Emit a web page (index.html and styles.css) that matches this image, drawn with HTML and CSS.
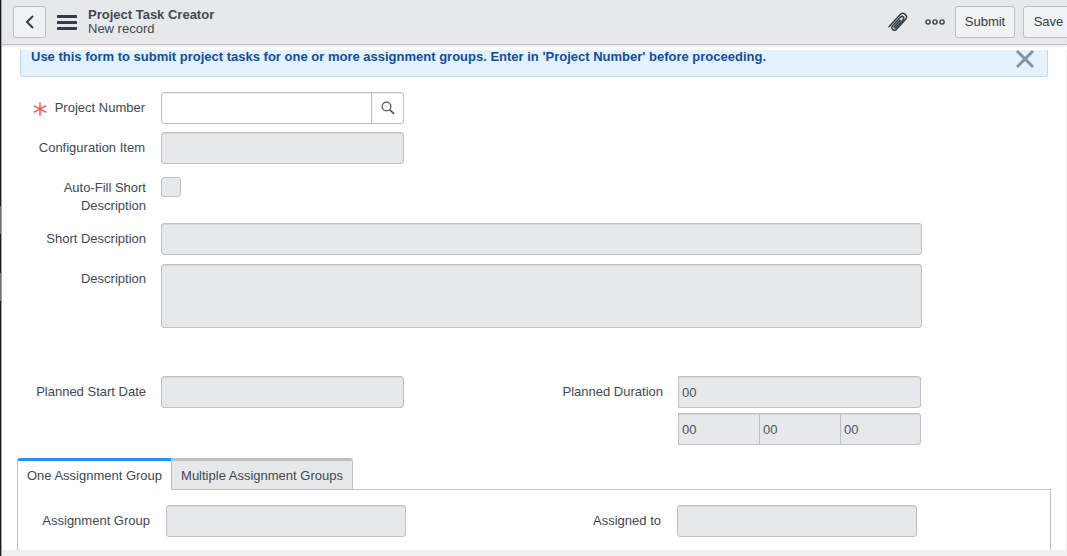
FILE: index.html
```html
<!DOCTYPE html>
<html lang="en">
<head>
<meta charset="utf-8">
<title>Project Task Creator</title>
<link rel="stylesheet" href="styles.css">
</head>
<body>
<div class="edge"><i class="thumb"></i><i class="thumb second"></i></div>
<div class="app">
  <header class="bar">
    <button class="btn back" aria-label="Back"><svg width="10" height="14" viewBox="0 0 10 14"><path d="M8 1 2 7l6 6" fill="none" stroke="#343d47" stroke-width="2"/></svg></button>
    <svg class="menu" width="20" height="15" viewBox="0 0 20 15"><path d="M1 1.5h18M1 7.5h18M1 13.5h18" stroke="#343d47" stroke-width="3" stroke-linecap="round"/></svg>
    <div class="title"><b>Project Task Creator</b><span>New record</span></div>
    <svg class="clip" width="20" height="20" viewBox="0 0 20 20"><path d="M1 14.8 12 2.7c3.3-3.4 8.6.8 5.6 4.6L8.8 17c-2.6 2.9-6.8-.2-4.2-3.2l7.9-8.5c1.9-2 4.6 0 2.8 2.2l-7.4 8c-1 1-2.3 0-1.4-1.1l5.5-6" fill="none" stroke="#343d47" stroke-width="1.5" stroke-linejoin="round" stroke-linecap="round"/></svg>
    <svg class="dots" width="20" height="6" viewBox="0 0 20 6"><g fill="none" stroke="#343d47" stroke-width="1.4"><circle cx="3" cy="3" r="2.1"/><circle cx="10" cy="3" r="2.1"/><circle cx="17" cy="3" r="2.1"/></g></svg>
    <button class="btn submit">Submit</button>
    <button class="btn save">Save</button>
  </header>
  <main class="content">
    <div class="notice"><b>Use this form to submit project tasks for one or more assignment groups. Enter in 'Project Number' before proceeding.</b>
      <svg class="close" width="20" height="20" viewBox="0 0 20 20"><path d="m2 2 16 16M18 2 2 18" stroke="#8792a0" stroke-width="3"/></svg>
    </div>
    <div class="row project">
      <label><svg class="star" width="14" height="14" viewBox="0 0 14 14"><path d="M7 .3v13.4M.8 3.6l12.4 6.8M13.2 3.6.8 10.4" stroke="#ff5454" stroke-width="1.5"/></svg>Project Number</label>
      <div class="field lookup"><span class="entry"></span><span class="search"><svg width="14" height="14" viewBox="0 0 14 14"><circle cx="5.5" cy="5.5" r="4.4" fill="none" stroke="#485563" stroke-width="1.2"/><path d="m8.8 8.8 4.4 4" stroke="#485563" stroke-width="1.7"/></svg></span></div>
    </div>
    <div class="row config"><label>Configuration Item</label><div class="field off"></div></div>
    <div class="row auto"><label>Auto-Fill Short<br>Description</label><div class="check"></div></div>
    <div class="row short"><label>Short Description</label><div class="field off wide"></div></div>
    <div class="row desc"><label>Description</label><div class="field off wide tall"></div></div>
    <div class="row planned">
      <label>Planned Start Date</label><div class="field off"></div>
      <label class="label-two">Planned Duration</label>
      <div class="duration"><div class="cell last">00</div><div class="parts"><div class="cell">00</div><div class="cell">00</div><div class="cell last">00</div></div></div>
    </div>
    <section class="tabs">
      <div class="tablist"><div class="tab active">One Assignment Group</div><div class="tab idle">Multiple Assignment Groups</div><div class="rest"></div></div>
      <div class="panel">
        <label>Assignment Group</label><div class="field off"></div>
        <label class="label-two">Assigned to</label><div class="field off"></div>
      </div>
    </section>
  </main>
  <div class="scroll"></div>
</div>
</body>
</html>
```
FILE: styles.css
```css
* { box-sizing: border-box; }
body { margin: 0; width: 1067px; height: 556px; display: flex; overflow: hidden; background: #fff; color: #404953; font: 13px/18px "Liberation Sans", Arial, sans-serif; }
svg { display: block; flex: none; }
.edge { width: 2px; flex: none; background: #1c1c20; border-right: 1px solid #a3a3a5; padding-top: 206px; }
.thumb { display: block; height: 28px; background: #707072; }
.second { margin-top: 39px; }
.app { width: 1065px; height: 556px; display: flex; flex-direction: column; overflow: hidden; }
.bar { height: 45px; flex: none; display: flex; align-items: flex-start; background: #e6e8ea; border-bottom: 1px solid #bdc0c4; box-shadow: 0 1px 3px rgba(0,0,0,.12); padding-left: 11px; }
.btn { height: 32px; margin: 6px 0 0; padding: 0; flex: none; display: flex; align-items: center; justify-content: center; border: 1px solid #bdc0c4; border-radius: 3px; background: #f1f2f3; color: #343d47; font: 13px/18px "Liberation Sans", Arial, sans-serif; }
.back { width: 33px; }
.menu { margin: 15px 0 0 11px; }
.title { margin: 8px 0 0 11px; width: 800px; flex: none; display: flex; flex-direction: column; line-height: 14px; }
.clip { margin: 12px 0 0; }
.dots { margin: 19px 0 0 17px; }
.submit { width: 60px; margin-left: 10px; }
.save { width: 51px; margin-left: 8px; }
.content { height: 500px; margin-top: 5px; flex: none; overflow: hidden; border-right: 1px solid #f0f0f0; }
.notice { height: 27px; width: 1028px; margin-left: 18px; padding: 0 12px 0 10px; display: flex; justify-content: space-between; overflow: hidden; border: 1px solid #b8d9fb; border-top: 0; border-radius: 0 0 3px 3px; background: #e4f1ff; color: #0f4fa0; line-height: 14px; }
.close { margin-top: -1px; }
.row { display: flex; align-items: flex-start; }
.row > label { width: 144px; padding-top: 7px; margin-right: 15px; flex: none; text-align: right; }
.project { margin-top: 15px; }
.row.project > label { display: flex; justify-content: flex-end; padding-right: 1px; }
.star { margin: 3px 8px 0 0; }
.config { margin-top: 8px; }
.row.config > label { padding-right: 1px; }
.auto { margin-top: 13px; height: 46px; }
.row.auto > label { padding-top: 2px; }
.desc { margin-top: 9px; }
.row.desc > label { padding-top: 6px; }
.planned { margin-top: 48px; height: 82px; }
.field { width: 243px; height: 32px; flex: none; border: 1px solid #bdc0c4; border-radius: 3px; background: #fff; box-shadow: inset 0 1px 1px rgba(0,0,0,.07); }
.off { background: #e6e8ea; }
.wide { width: 761px; }
.tall { height: 64px; }
.lookup { display: flex; }
.entry { width: 210px; border-right: 1px solid #bdc0c4; }
.search { flex: 1; display: flex; align-items: center; justify-content: center; }
.check { width: 20px; height: 20px; border: 1px solid #bdc0c4; border-radius: 3px; background: #e6e8ea; }
.row.planned > .label-two { width: 259px; }
.duration { width: 243px; }
.cell { height: 32px; padding: 8px 3px 6px; line-height: 16px; border: 1px solid #bdc0c4; background: #e6e8ea; color: #485563; box-shadow: inset 0 1px 1px rgba(0,0,0,.07); }
.parts { display: grid; grid-template-columns: 81px 81px 81px; margin-top: 5px; }
.parts .cell:not(.last) { border-right: 0; }
.last { border-radius: 0 3px 3px 0; }
.tabs { width: 1034px; margin-left: 15px; }
.tablist { height: 32px; display: flex; }
.tab { height: 32px; padding-top: 6px; border-top: 3px solid #bdc0c4; text-align: center; line-height: 18px; }
.active { width: 154px; border-left: 1px solid #bdc0c4; border-top-color: #278efc; border-radius: 3px 0 0 0; }
.idle { width: 182px; background: #e6e8ea; border-left: 1px solid #bdc0c4; border-right: 1px solid #bdc0c4; border-bottom: 1px solid #bdc0c4; border-radius: 0 3px 0 0; }
.rest { flex: 1; border-bottom: 1px solid #bdc0c4; }
.panel { height: 70px; padding-top: 15px; display: flex; border: 1px solid #bdc0c4; border-top: 0; }
.panel label { width: 132px; padding-top: 7px; margin-right: 16px; text-align: right; flex: none; }
.panel .field { width: 240px; }
.panel .label-two { width: 255px; }
.scroll { height: 6px; flex: none; background: #f0f0f0; }
```
